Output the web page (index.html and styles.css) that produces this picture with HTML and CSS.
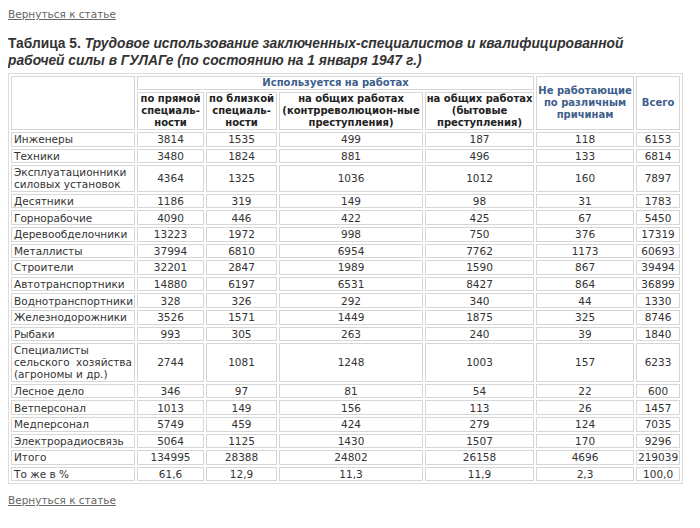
FILE: index.html
```html
<!DOCTYPE html>
<html lang="ru">
<head>
<meta charset="utf-8">
<title>Таблица 5</title>
<link rel="stylesheet" href="styles.css">
</head>
<body>
<a class="back" href="#">Вернуться к статье</a>
<h3 class="title">Таблица 5. <em>Трудовое использование заключенных-специалистов и квалифицированной рабочей силы в ГУЛАГе (по состоянию на 1 января 1947 г.)</em></h3>
<table class="data">
<colgroup>
<col class="c1"><col class="c2"><col class="c3"><col class="c4"><col class="c5"><col class="c6"><col class="c7">
</colgroup>
<thead>
<tr><th rowspan="2"></th><th colspan="4" class="blue">Используется на работах</th><th rowspan="2" class="blue">Не работающие по различным причинам</th><th rowspan="2" class="blue">Всего</th></tr>
<tr><th>по прямой специаль-ности</th><th>по близкой специаль-ности</th><th>на общих работах (контрреволюцион-ные преступления)</th><th>на общих работах (бытовые преступления)</th></tr>
</thead>
<tbody>
<tr><td>Инженеры</td><td>3814</td><td>1535</td><td>499</td><td>187</td><td>118</td><td>6153</td></tr>
<tr><td>Техники</td><td>3480</td><td>1824</td><td>881</td><td>496</td><td>133</td><td>6814</td></tr>
<tr><td>Эксплуатационники силовых установок</td><td>4364</td><td>1325</td><td>1036</td><td>1012</td><td>160</td><td>7897</td></tr>
<tr><td>Десятники</td><td>1186</td><td>319</td><td>149</td><td>98</td><td>31</td><td>1783</td></tr>
<tr><td>Горнорабочие</td><td>4090</td><td>446</td><td>422</td><td>425</td><td>67</td><td>5450</td></tr>
<tr><td>Деревообделочники</td><td>13223</td><td>1972</td><td>998</td><td>750</td><td>376</td><td>17319</td></tr>
<tr><td>Металлисты</td><td>37994</td><td>6810</td><td>6954</td><td>7762</td><td>1173</td><td>60693</td></tr>
<tr><td>Строители</td><td>32201</td><td>2847</td><td>1989</td><td>1590</td><td>867</td><td>39494</td></tr>
<tr><td>Автотранспортники</td><td>14880</td><td>6197</td><td>6531</td><td>8427</td><td>864</td><td>36899</td></tr>
<tr><td>Воднотранспортники</td><td>328</td><td>326</td><td>292</td><td>340</td><td>44</td><td>1330</td></tr>
<tr><td>Железнодорожники</td><td>3526</td><td>1571</td><td>1449</td><td>1875</td><td>325</td><td>8746</td></tr>
<tr><td>Рыбаки</td><td>993</td><td>305</td><td>263</td><td>240</td><td>39</td><td>1840</td></tr>
<tr><td>Специалисты сельского хозяйства (агрономы и др.)</td><td>2744</td><td>1081</td><td>1248</td><td>1003</td><td>157</td><td>6233</td></tr>
<tr><td>Лесное дело</td><td>346</td><td>97</td><td>81</td><td>54</td><td>22</td><td>600</td></tr>
<tr><td>Ветперсонал</td><td>1013</td><td>149</td><td>156</td><td>113</td><td>26</td><td>1457</td></tr>
<tr><td>Медперсонал</td><td>5749</td><td>459</td><td>424</td><td>279</td><td>124</td><td>7035</td></tr>
<tr><td>Электрорадиосвязь</td><td>5064</td><td>1125</td><td>1430</td><td>1507</td><td>170</td><td>9296</td></tr>
<tr><td>Итого</td><td>134995</td><td>28388</td><td>24802</td><td>26158</td><td>4696</td><td>219039</td></tr>
<tr><td>То же в %</td><td>61,6</td><td>12,9</td><td>11,3</td><td>11,9</td><td>2,3</td><td>100,0</td></tr>
</tbody>
</table>
<a class="back back-bottom" href="#">Вернуться к статье</a>
</body>
</html>
```

FILE: styles.css
```css
body {
  margin: 8px;
  background: #fff;
  font-family: "DejaVu Sans", Verdana, sans-serif;
  font-size: 10.5px;
  color: #333;
}
.back {
  display: inline-block;
  color: #666;
  text-decoration: underline;
  line-height: 12px;
}
.title {
  max-width: 640px;
  margin: 15px 0 4px;
  font-family: "Liberation Sans", Arial, sans-serif;
  font-size: 13.8px;
  line-height: 17px;
  font-weight: bold;
  color: #333;
}
.title em {
  font-style: italic;
}
.data {
  width: 673px;
  table-layout: fixed;
  border: 1px solid #dcdcdc;
  border-spacing: 2px;
  border-collapse: separate;
}
.c1 { width: 124px; }
.c2 { width: 67px; }
.c3 { width: 71px; }
.c4 { width: 144px; }
.c5 { width: 109px; }
.c6 { width: 98px; }
.c7 { width: 44px; }
.data th, .data td {
  border: 1px solid #d6d6d6;
  padding: 0.3px 2px;
  line-height: 12px;
  text-align: center;
  vertical-align: middle;
}
.data td:last-child {
  padding: 0.3px 0;
}
.data th {
  font-size: 10px;
  font-weight: bold;
  color: #222;
  padding: 0;
}
.data th.blue {
  color: #3d5e8c;
}
.data td:first-child {
  text-align: justify;
  padding-left: 2px;
}
.back-bottom {
  margin-top: 10px;
}
```
